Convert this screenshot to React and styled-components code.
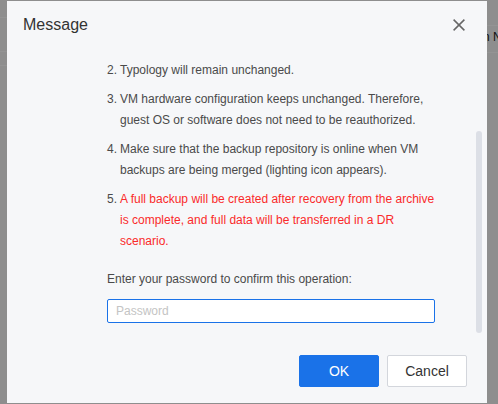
import React, { useEffect, useRef } from 'react';
import styled, { createGlobalStyle } from 'styled-components';

const GlobalStyle = createGlobalStyle`
    html, body {
        margin: 0;
        padding: 0;
        width: 498px;
        height: 404px;
        overflow: hidden;
        font-family: "Liberation Sans", Arial, sans-serif;
    }
`

const Page = styled.div`
    position: relative;
    width: 498px;
    height: 404px;
    overflow: hidden;
    background-color: #f5f5f5;
    display: flex;
`

const LeftPane = styled.div`
    width: 250px;
    display: flex;
    flex-direction: column;
`

const RightPane = styled.div`
    flex: 1;
    display: flex;
    flex-direction: column;
    overflow: hidden;
`

const PageRow = styled.div`
    height: ${props => props.h}px;
    border-bottom: 1px solid #ffffff;
    display: flex;
    align-items: flex-start;
    justify-content: flex-end;
    font-size: 12px;
    line-height: 14px;
    color: #222;
    white-space: nowrap;
`

const HeadCell = styled.span`
    margin-top: 4px;
    margin-right: -27px;
`

const Mask = styled.div`
    position: absolute;
    inset: 0;
    background-color: rgba(0, 0, 0, 0.42);
`

const Dialog = styled.div`
    position: absolute;
    left: 7px;
    top: 1px;
    width: 480px;
    height: 402px;
    background-color: #f6f7f9;
    display: flex;
    flex-direction: column;
`

const Header = styled.div`
    height: 48px;
    flex-shrink: 0;
    display: flex;
    align-items: center;
    padding: 0 22px 0 16px;
`

const Title = styled.h1`
    margin: 0;
    flex: 1;
    font-size: 16px;
    font-weight: normal;
    color: #333;
`

const Close = styled.button`
    border: none;
    background: none;
    padding: 0;
    width: 12px;
    height: 12px;
    display: flex;
    cursor: pointer;
`

const BodyWrap = styled.div`
    position: relative;
    flex: 1;
    min-height: 0;
    margin-right: 5px;
`

const Body = styled.div`
    box-sizing: border-box;
    height: 100%;
    overflow-y: auto;
    scrollbar-width: none;
    padding: 8px 45px 11px 100px;
    font-size: 12px;
    line-height: 21px;
    color: #4a4a4a;

    &::-webkit-scrollbar {
        display: none;
    }
`

const Thumb = styled.div`
    position: absolute;
    right: 0;
    top: 82px;
    width: 6px;
    height: 202px;
    border-radius: 3px;
    background-color: #dcdfe6;
`

const Intro = styled.p`
    margin: 0 0 8px;
`

const Item = styled.div`
    display: flex;
    margin-bottom: 8px;
`

const Num = styled.span`
    width: 13px;
    flex-shrink: 0;
`

const ItemText = styled.span`
    color: ${props => props.warn ? '#fa2a2a' : '#4a4a4a'};
`

const Label = styled.div`
    margin-top: 17px;
    margin-bottom: 9px;
`

const Input = styled.input`
    display: block;
    box-sizing: border-box;
    width: 328px;
    height: 24px;
    margin: 0;
    padding: 0 8px;
    border: 1px solid #1a72e8;
    border-radius: 2px;
    background-color: #fff;
    font-family: inherit;
    font-size: 12px;
    color: #333;
    outline: none;

    &::placeholder {
        color: #c4c4c4;
    }
`

const Footer = styled.div`
    flex-shrink: 0;
    display: flex;
    justify-content: flex-end;
    gap: 8px;
    padding: 21px 20px 16px;
`

const Button = styled.button`
    width: 80px;
    height: 32px;
    border-radius: 2px;
    font-family: inherit;
    font-size: 14px;
    cursor: pointer;
    border: 1px solid ${props => props.primary ? '#1a72e8' : '#d3d6dc'};
    background-color: ${props => props.primary ? '#1a72e8' : '#ffffff'};
    color: ${props => props.primary ? '#ffffff' : '#333333'};
`

const items = [
    { n: '1.', text: 'The VM will be recovered to the original location, and the original VM will be overwritten.' },
    { n: '2.', text: 'Typology will remain unchanged.' },
    { n: '3.', text: 'VM hardware configuration keeps unchanged. Therefore, guest OS or software does not need to be reauthorized.' },
    { n: '4.', text: 'Make sure that the backup repository is online when VM backups are being merged (lighting icon appears).' },
    { n: '5.', text: 'A full backup will be created after recovery from the archive is complete, and full data will be transferred in a DR scenario.', warn: true },
];

const CloseIcon = () => (
    <svg width="12" height="12" viewBox="0 0 12 12">
        <path d="M0.6 0.6 L11.4 11.4 M11.4 0.6 L0.6 11.4" stroke="#666" strokeWidth="1.5" fill="none" />
    </svg>
);

const App = () => {
    const bodyRef = useRef(null);

    useEffect(() => {
        // the reference shows the dialog scrolled to its end
        const el = bodyRef.current;
        if (el) el.scrollTop = el.scrollHeight;
    }, []);

    return (
        <>
            <GlobalStyle />
            <Page>
                <LeftPane>
                    <PageRow h={17} />
                    <PageRow h={33} />
                    <PageRow h={13} />
                </LeftPane>
                <RightPane>
                    <PageRow h={25} />
                    <PageRow h={26}>
                        <HeadCell>Location Name</HeadCell>
                    </PageRow>
                </RightPane>
                <Mask />
                <Dialog>
                    <Header>
                        <Title>Message</Title>
                        <Close aria-label="Close"><CloseIcon /></Close>
                    </Header>
                    <BodyWrap>
                        <Body ref={bodyRef}>
                            <Intro>The following changes will take place after the VM is recovered from the archive:</Intro>
                            {items.map(item => (
                                <Item key={item.n}>
                                    <Num>{item.n}</Num>
                                    <ItemText warn={item.warn}>{item.text}</ItemText>
                                </Item>
                            ))}
                            <Label>Enter your password to confirm this operation:</Label>
                            <Input type="password" placeholder="Password" />
                        </Body>
                        <Thumb />
                    </BodyWrap>
                    <Footer>
                        <Button primary>OK</Button>
                        <Button>Cancel</Button>
                    </Footer>
                </Dialog>
            </Page>
        </>
    );
};

export default App;
